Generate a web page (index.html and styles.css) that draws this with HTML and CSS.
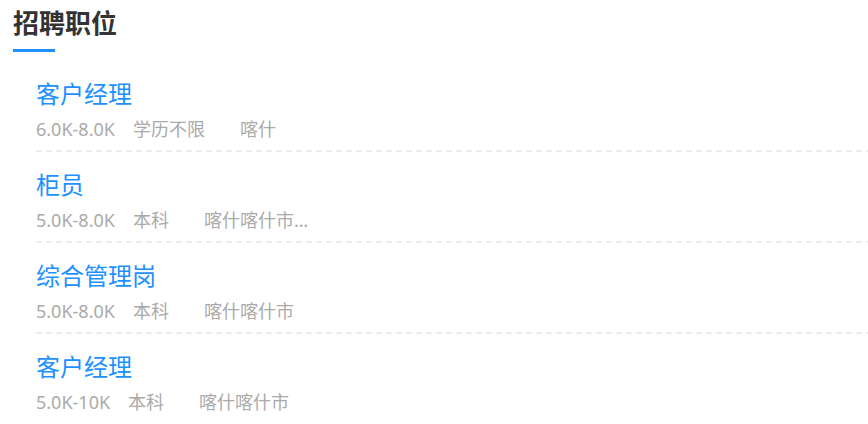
FILE: index.html
```html
<!DOCTYPE html>
<html lang="zh-CN">
<head>
<meta charset="utf-8">
<title>招聘职位</title>
<link rel="stylesheet" href="styles.css">
</head>
<body>
<section class="jobs">
  <h2 class="jobs-title">招聘职位</h2>
  <div class="jobs-bar"></div>
  <ul class="job-list">
    <li class="job">
      <a class="job-name" href="#">客户经理</a>
      <div class="job-meta"><span class="salary">6.0K-8.0K</span><span class="edu">学历不限</span><span class="loc">喀什</span></div>
    </li>
    <li class="job">
      <a class="job-name" href="#">柜员</a>
      <div class="job-meta"><span class="salary">5.0K-8.0K</span><span class="edu">本科</span><span class="loc">喀什喀什市喀什市</span></div>
    </li>
    <li class="job">
      <a class="job-name" href="#">综合管理岗</a>
      <div class="job-meta"><span class="salary">5.0K-8.0K</span><span class="edu">本科</span><span class="loc">喀什喀什市</span></div>
    </li>
    <li class="job last">
      <a class="job-name" href="#">客户经理</a>
      <div class="job-meta"><span class="salary">5.0K-10K</span><span class="edu">本科</span><span class="loc">喀什喀什市</span></div>
    </li>
  </ul>
</section>
</body>
</html>
```

FILE: styles.css
```css
html, body {
  margin: 0;
  padding: 0;
  background: #fff;
}
body {
  font-family: "Noto Sans", "Noto Sans CJK SC", sans-serif;
}
.jobs {
  padding: 8px 0 0 13px;
}
.jobs-title {
  margin: 0;
  font-size: 26px;
  line-height: 30px;
  font-weight: 700;
  color: #333;
}
.jobs-bar {
  width: 42px;
  height: 3px;
  margin-top: 11px;
  background: #1e90ff;
}
.job-list {
  list-style: none;
  margin: 0;
  padding: 0 0 0 23px;
}
.job {
  padding: 19px 0 11px;
  background-image: repeating-linear-gradient(90deg, #ececec 0 6px, transparent 6px 10px);
  background-size: 100% 2px;
  background-repeat: no-repeat;
  background-position: left bottom;
}
.job:first-child {
  padding-top: 28px;
}
.job.last {
  background-image: none;
}
.job-name {
  display: block;
  font-size: 24px;
  line-height: 28px;
  color: #1e90ff;
  text-decoration: none;
}
.job-meta {
  display: flex;
  align-items: center;
  margin-top: 9px;
  font-size: 18px;
  line-height: 24px;
  color: #aaa;
}
.salary {
  margin-right: 18px;
}
.edu {
  margin-right: 35px;
}
.loc {
  max-width: 112px;
  overflow: hidden;
  white-space: nowrap;
  text-overflow: ellipsis;
}
```
